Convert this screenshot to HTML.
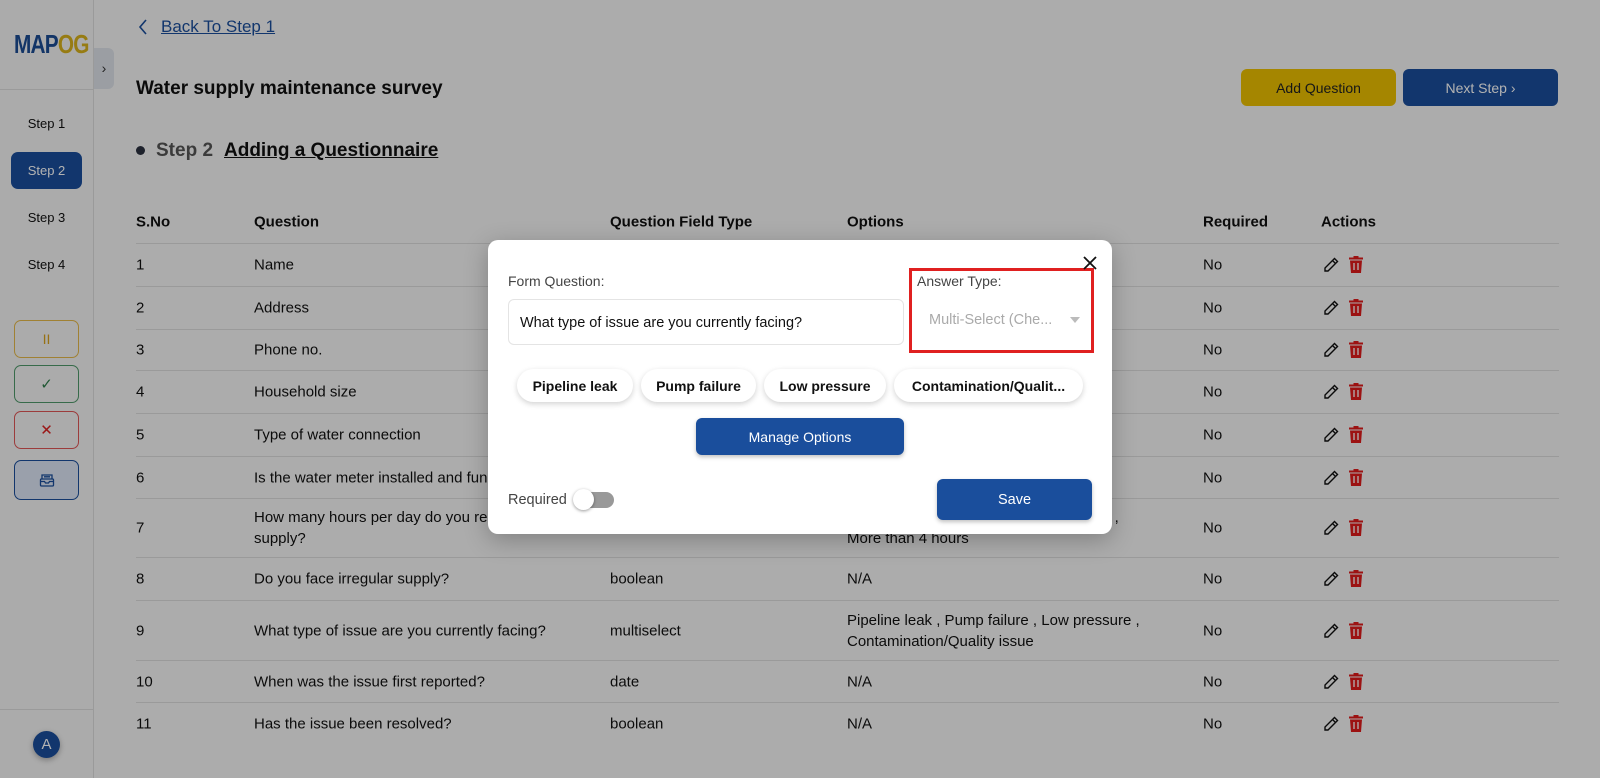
<!DOCTYPE html>
<html><head><meta charset="utf-8"><style>
*{box-sizing:border-box;margin:0;padding:0}
body{width:1600px;height:778px;overflow:hidden;font-family:"Liberation Sans",sans-serif;background:#f7f7f7;position:relative;color:#111}
.sb{position:absolute;left:0;top:0;width:94px;height:778px;border-right:1px solid #ddd;background:#f5f5f5}
.abs{position:absolute}
.step{position:absolute;left:11px;width:71px;text-align:center;font-size:13px}
.sbtn{position:absolute;left:14px;width:65px;border:1.5px solid;border-radius:7px;height:38px;display:flex;align-items:center;justify-content:center}
.row{position:absolute;left:136px;width:1423px;border-top:1px solid #ddd;font-size:15px}
.c{position:absolute;top:50%;transform:translateY(-50%);line-height:21px}
.ov{position:absolute;left:0;top:0;width:1600px;height:778px;background:rgba(0,0,0,0.3)}
.modal{position:absolute;left:488px;top:240px;width:624px;height:294px;background:#fff;border-radius:10px;box-shadow:0 6px 24px rgba(0,0,0,.25)}
.chip{position:absolute;top:129px;height:33px;border-radius:17px;background:#fff;box-shadow:0 2px 6px rgba(0,0,0,.18);font-size:14px;font-weight:bold;display:flex;align-items:center;justify-content:center;color:#111}
.btn{position:absolute;background:#1a4e9c;color:#fff;border-radius:6px;display:flex;align-items:center;justify-content:center;font-size:14px;box-shadow:0 2px 4px rgba(0,0,0,.25)}
</style></head><body>
<div class="sb">
 <div class="abs" style="left:14px;top:29px;font-size:26px;font-weight:bold;letter-spacing:-1px;transform:scaleX(.8);transform-origin:left"><span style="color:#1c4c94">MAP</span><span style="color:#d8b21c">OG</span></div>
 <div class="abs" style="left:0;top:89px;width:94px;border-top:1px solid #ddd"></div>
 <div class="step" style="top:116px">Step 1</div>
 <div class="step" style="top:152px;height:37px;background:#1a4e9c;color:#fff;border-radius:7px;line-height:37px">Step 2</div>
 <div class="step" style="top:210px">Step 3</div>
 <div class="step" style="top:257px">Step 4</div>
 <div class="sbtn" style="top:320px;border-color:#e6b94a;color:#d9a21e;font-size:14px">II</div>
 <div class="sbtn" style="top:365px;border-color:#4f9a6a;color:#2e7d4a;font-size:15px">✓</div>
 <div class="sbtn" style="top:411px;border-color:#e05656;color:#d22;font-size:15px">✕</div>
 <div class="sbtn" style="top:460px;height:40px;border-color:#1a4e9c;background:#dde6f5"><svg width="16" height="14" viewBox="0 0 16 14" fill="none" stroke="#1a4e9c" stroke-width="1.3"><rect x="1.5" y="6" width="13" height="7" rx="1"/><path d="M3 6V2h10v4M1.5 8.5h4l1 1.5h3l1-1.5h4M5 3.8h6"/></svg></div>
 <div class="abs" style="left:0;top:709px;width:94px;border-top:1px solid #ddd"></div>
 <div class="abs" style="left:33px;top:731px;width:27px;height:27px;border-radius:50%;background:#1a4e9c;color:#fff;font-size:15px;text-align:center;line-height:27px;box-shadow:0 2px 6px rgba(0,0,0,.3)">A</div>
</div>
<div class="abs" style="left:94px;top:48px;width:20px;height:41px;background:#dfe3ea;border-radius:0 6px 6px 0;font-size:14px;text-align:center;line-height:40px;color:#333">›</div>
<svg class="abs" style="left:138px;top:19px" width="10" height="16" viewBox="0 0 10 16" fill="none" stroke="#1a4e9c" stroke-width="1.6"><path d="M8 1L2 8l6 7"/></svg>
<div class="abs" style="left:161px;top:17px;font-size:17px;color:#1a4e9c;text-decoration:underline">Back To Step 1</div>
<div class="abs" style="left:136px;top:78px;font-size:19px;font-weight:bold">Water supply maintenance survey</div>
<div class="btn" style="left:1241px;top:69px;width:155px;height:37px;background:#ecc100;color:#222;box-shadow:none">Add Question</div>
<div class="btn" style="left:1403px;top:69px;width:155px;height:37px;box-shadow:none">Next Step ›</div>
<div class="abs" style="left:136px;top:146px;width:9px;height:9px;border-radius:50%;background:#2b3140"></div>
<div class="abs" style="left:156px;top:140px;font-size:19px;color:#555;font-weight:bold">Step 2</div>
<div class="abs" style="left:224px;top:140px;font-size:19px;font-weight:bold;text-decoration:underline">Adding a Questionnaire</div>

<div class="row" style="top:200px;height:43px;border:none;font-weight:bold"><span class="c" style="left:0">S.No</span><span class="c" style="left:118px">Question</span><span class="c" style="left:474px">Question Field Type</span><span class="c" style="left:711px">Options</span><span class="c" style="left:1067px">Required</span><span class="c" style="left:1185px">Actions</span></div>
<div id="rows"></div>
<script>
var R=[[243,286,"1","Name","text","N/A"],[286,329,"2","Address","text","N/A"],[329,370,"3","Phone no.","number","N/A"],[370,413,"4","Household size","number","N/A"],[413,456,"5","Type of water connection","dropdown","Individual , Shared"],[456,498,"6","Is the water meter installed and functional?","boolean","N/A"],[498,557,"7","How many hours per day do you receive water<br>supply?","radio","Less than 1 hour , 1-2 hours , 2-4 hours ,<br>More than 4 hours"],[557,600,"8","Do you face irregular supply?","boolean","N/A"],[600,660,"9","What type of issue are you currently facing?","multiselect","Pipeline leak , Pump failure , Low pressure ,<br>Contamination/Quality issue"],[660,702,"10","When was the issue first reported?","date","N/A"],[702,745,"11","Has the issue been resolved?","boolean","N/A"]];
var h="";R.forEach(function(r){h+='<div class="row" style="top:'+r[0]+'px;height:'+(r[1]-r[0])+'px"><span class="c" style="left:0">'+r[2]+'</span><span class="c" style="left:118px">'+r[3]+'</span><span class="c" style="left:474px">'+r[4]+'</span><span class="c" style="left:711px">'+r[5]+'</span><span class="c" style="left:1067px">No</span><span class="c" style="left:1186px;height:20px"><svg width="18" height="18" viewBox="0 0 18 18" fill="none" stroke="#111" stroke-width="1.4"><path d="M12.5 2.5l3 3L6 15H3v-3z M10.5 4.5l3 3"/></svg><svg style="margin-left:8px" width="16" height="19" viewBox="0 0 16 19"><path d="M5.5 1h5v1.5H15v2H1v-2h4.5z M2 5.5h12l-1 12.5H3z" fill="#e01b1b"/><path d="M6 8v7M10 8v7" stroke="#fff" stroke-width="1.3"/></svg></span></div>'});
document.getElementById("rows").innerHTML=h;
</script>
<div class="ov"></div>
<div class="modal">
 <div class="abs" style="left:20px;top:33px;font-size:14px;color:#444">Form Question:</div>
 <div class="abs" style="left:20px;top:59px;width:396px;height:46px;border:1px solid #e4e4e4;border-radius:6px;font-size:14.5px;padding:15px 11px;color:#111">What type of issue are you currently facing?</div>
 <div class="abs" style="left:421px;top:28px;width:185px;height:85px;border:3px solid #e02020"></div>
 <div class="abs" style="left:429px;top:33px;font-size:14px;color:#444">Answer Type:</div>
 <div class="abs" style="left:441px;top:72px;font-size:14.5px;color:#aaa">Multi-Select (Che...</div>
 <div class="abs" style="left:582px;top:77px;width:0;height:0;border-left:5px solid transparent;border-right:5px solid transparent;border-top:6px solid #bbb"></div>
 <svg class="abs" style="left:595px;top:16px" width="14" height="14" viewBox="0 0 14 14" stroke="#111" stroke-width="1.8"><path d="M1 1l12 12M13 1L1 13"/></svg>
 <div class="chip" style="left:29px;width:116px">Pipeline leak</div>
 <div class="chip" style="left:153px;width:115px">Pump failure</div>
 <div class="chip" style="left:276px;width:122px">Low pressure</div>
 <div class="chip" style="left:406px;width:189px">Contamination/Qualit...</div>
 <div class="btn" style="left:208px;top:178px;width:208px;height:37px">Manage Options</div>
 <div class="abs" style="left:20px;top:252px;font-size:14.5px;color:#444">Required</div>
 <div class="abs" style="left:88px;top:252px;width:38px;height:16px;border-radius:8px;background:#999"></div>
 <div class="abs" style="left:85px;top:249px;width:21px;height:21px;border-radius:50%;background:#fff;box-shadow:0 1px 3px rgba(0,0,0,.4)"></div>
 <div class="btn" style="left:449px;top:239px;width:155px;height:41px;font-size:14.5px">Save</div>
</div>
</body></html>
